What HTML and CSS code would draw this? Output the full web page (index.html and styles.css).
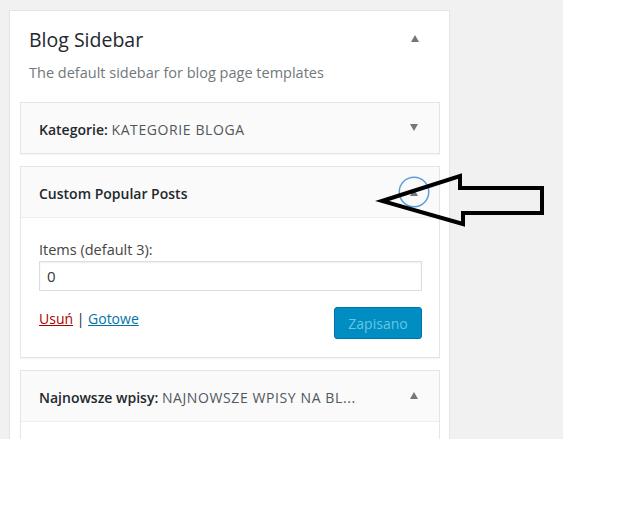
FILE: index.html
```html
<!DOCTYPE html>
<html lang="en">
<head>
  <meta charset="UTF-8" />
  <title>Widgets</title>
  <link rel="stylesheet" href="styles.css">
</head>
<body>
  <div class="screen">
    <div class="sidebar">
      <div class="sidebar-name">
        <h2>Blog Sidebar</h2>
        <span class="arrow up"></span>
      </div>
      <p class="sidebar-desc">The default sidebar for blog page templates</p>

      <div class="widget">
        <div class="widget-top">
          <h3>Kategorie: <span class="in-title">KATEGORIE BLOGA</span></h3>
          <span class="arrow down"></span>
        </div>
      </div>

      <div class="widget open">
        <div class="widget-top">
          <h3>Custom Popular Posts</h3>
          <span class="toggle focused"><span class="arrow up"></span></span>
        </div>
        <div class="widget-inside">
          <label for="items">Items (default 3):</label>
          <input id="items" type="text" value="0" />
          <div class="widget-actions">
            <div class="links">
              <a href="#" class="delete">Usuń</a> | <a href="#" class="close">Gotowe</a>
            </div>
            <button class="save" disabled>Zapisano</button>
          </div>
        </div>
      </div>

      <div class="widget open">
        <div class="widget-top">
          <h3>Najnowsze wpisy: <span class="in-title">NAJNOWSZE WPISY NA BL...</span></h3>
          <span class="arrow up"></span>
        </div>
        <div class="widget-inside tall"></div>
      </div>
    </div>
  </div>

  <!-- hand-drawn pointer over the screenshot -->
  <svg class="pointer" width="640" height="508" viewBox="0 0 640 508">
    <polygon points="382,201 460,176 460,188 542,188 542,213 463,213 463,224" fill="none" stroke="#000" stroke-width="4" stroke-linejoin="miter" />
  </svg>
</body>
</html>
```

FILE: styles.css
```css
* {
  margin: 0;
  padding: 0;
  box-sizing: border-box;
}

body {
  font-family: "Open Sans", "Noto Sans", sans-serif;
  background-color: #fff;
  color: #23282d;
  width: 640px;
  height: 508px;
  position: relative;
  overflow: hidden;
}

.screen {
  width: 563px;
  height: 439px;
  background-color: #f1f1f1;
  padding: 10px 0 0 9px;
  overflow: hidden;
}

.sidebar {
  width: 441px;
  background-color: #fff;
  border: 1px solid #e5e5e5;
  box-shadow: 0 1px 1px rgba(0, 0, 0, 0.04);
  padding: 15px 9px 0 10px;
  height: 600px;
}

.sidebar-name {
  display: flex;
  justify-content: space-between;
  align-items: center;
  padding: 0 21px 0 9px;
}

.sidebar-name h2 {
  font-size: 19.5px;
  font-weight: 400;
  line-height: 28px;
}

.sidebar-name .arrow {
  margin-top: -4px;
}

.sidebar-desc {
  font-size: 14.5px;
  line-height: 20px;
  color: #72777c;
  padding-left: 9px;
  margin: 9px 0 19px;
}

.arrow {
  display: block;
  width: 0;
  height: 0;
  border-left: 4.5px solid transparent;
  border-right: 4.5px solid transparent;
}

.arrow.up {
  border-bottom: 7px solid #72777c;
}

.arrow.down {
  border-top: 7px solid #72777c;
}

.widget {
  border: 1px solid #e5e5e5;
  box-shadow: 0 1px 1px rgba(0, 0, 0, 0.04);
  margin-bottom: 12px;
  background-color: #fff;
}

.widget-top {
  height: 50px;
  background-color: #fafafa;
  display: flex;
  justify-content: space-between;
  align-items: center;
  padding: 0 21px 0 18px;
}

.widget.open .widget-top {
  height: 51px;
  border-bottom: 1px solid #eee;
}

.widget-top h3 {
  font-size: 14px;
  font-weight: 600;
  line-height: 20px;
  margin-top: 3px;
}

.in-title {
  font-weight: 400;
  color: #50575e;
  letter-spacing: 0.6px;
}

.widget-top > .arrow {
  margin-top: -2px;
}

.toggle {
  width: 28px;
  height: 28px;
  margin-right: -10px;
  border-radius: 50%;
  display: flex;
  justify-content: center;
  align-items: center;
}

.toggle.focused {
  box-shadow: 0 0 0 1.5px #5b9dd9;
}

.widget-inside {
  padding: 22px 17px 18px 18px;
}

.widget-inside.tall {
  height: 120px;
}

.widget-inside label {
  display: block;
  font-size: 14.5px;
  line-height: 20px;
  color: #444;
  margin-bottom: 1px;
}

.widget-inside input {
  display: block;
  width: 100%;
  height: 30px;
  border: 1px solid #ddd;
  box-shadow: inset 0 1px 2px rgba(0, 0, 0, 0.07);
  padding: 0 7px;
  font-family: "Open Sans", "Noto Sans", sans-serif;
  font-size: 15px;
  color: #32373c;
}

.widget-actions {
  display: flex;
  justify-content: space-between;
  align-items: flex-start;
  margin-top: 16px;
}

.links {
  font-size: 14px;
  line-height: 20px;
  margin-top: 2px;
  color: #23282d;
}

.links .delete {
  color: #a00;
}

.links .close {
  color: #0073aa;
}

.save {
  width: 88px;
  height: 32px;
  background-color: #008ec2;
  border: 1px solid #0073aa;
  border-radius: 3px;
  color: #66c6e4;
  font-family: "Open Sans", "Noto Sans", sans-serif;
  font-size: 14px;
}

.pointer {
  position: absolute;
  left: 0;
  top: 0;
  pointer-events: none;
}

input:focus,
button:focus {
  outline: none;
}
```
